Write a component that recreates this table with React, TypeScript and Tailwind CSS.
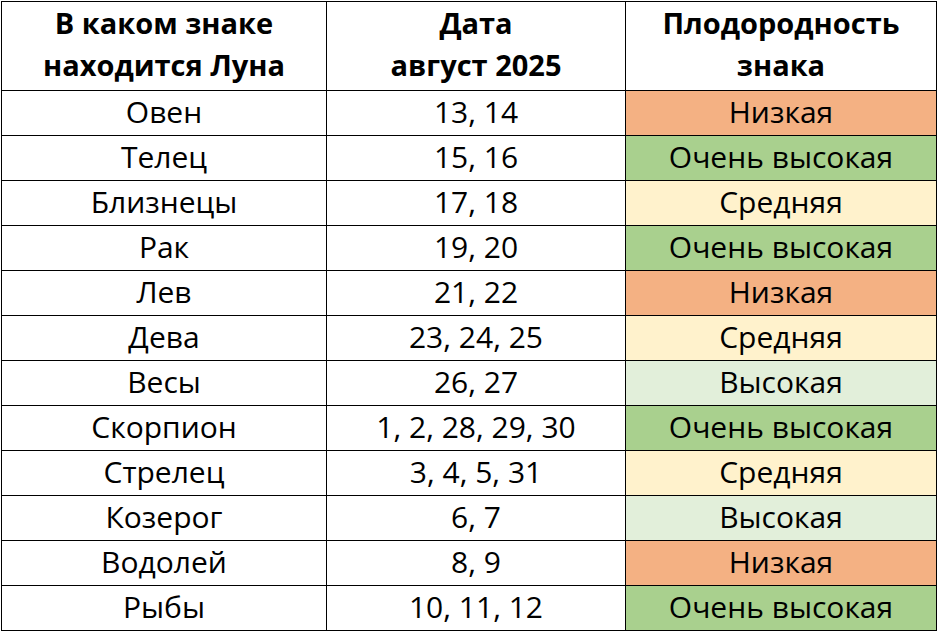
const rows: { sign: string; dates: string; level: string }[] = [
  { sign: 'Овен', dates: '13, 14', level: 'Низкая' },
  { sign: 'Телец', dates: '15, 16', level: 'Очень высокая' },
  { sign: 'Близнецы', dates: '17, 18', level: 'Средняя' },
  { sign: 'Рак', dates: '19, 20', level: 'Очень высокая' },
  { sign: 'Лев', dates: '21, 22', level: 'Низкая' },
  { sign: 'Дева', dates: '23, 24, 25', level: 'Средняя' },
  { sign: 'Весы', dates: '26, 27', level: 'Высокая' },
  { sign: 'Скорпион', dates: '1, 2, 28, 29, 30', level: 'Очень высокая' },
  { sign: 'Стрелец', dates: '3, 4, 5, 31', level: 'Средняя' },
  { sign: 'Козерог', dates: '6, 7', level: 'Высокая' },
  { sign: 'Водолей', dates: '8, 9', level: 'Низкая' },
  { sign: 'Рыбы', dates: '10, 11, 12', level: 'Очень высокая' },
];

const fill: Record<string, string> = {
  'Низкая': 'bg-[#f4b183]',
  'Очень высокая': 'bg-[#a9d08e]',
  'Средняя': 'bg-[#fff2cc]',
  'Высокая': 'bg-[#e2efda]',
};

export default function App() {
  return (
    <div className="w-[937px] h-[631px] bg-white pl-px pt-px font-['Open_Sans',sans-serif] text-black">
      <table className="border-collapse table-fixed w-[935px]">
        <colgroup>
          <col className="w-[325px]" />
          <col className="w-[299px]" />
          <col className="w-[311px]" />
        </colgroup>
        <thead>
          <tr className="h-[89px]">
            <th className="border border-black font-bold text-[29px] leading-[42px] text-center pb-[4px]">
              В каком знаке<br />находится Луна
            </th>
            <th className="border border-black font-bold text-[29px] leading-[42px] text-center pb-[4px]">
              Дата<br />август 2025
            </th>
            <th className="border border-black font-bold text-[29px] leading-[42px] text-center pb-[4px]">
              Плодородность<br />знака
            </th>
          </tr>
        </thead>
        <tbody>
          {rows.map((r) => (
            <tr key={r.sign} className="h-[45px]">
              <td className="border border-black text-center text-[30px] leading-[41px] pb-[3px] whitespace-nowrap">{r.sign}</td>
              <td className="border border-black text-center text-[30px] leading-[41px] pb-[3px] whitespace-nowrap">{r.dates}</td>
              <td className={`border border-black text-center text-[30px] leading-[41px] pb-[3px] whitespace-nowrap ${fill[r.level]}`}>{r.level}</td>
            </tr>
          ))}
        </tbody>
      </table>
    </div>
  );
}
